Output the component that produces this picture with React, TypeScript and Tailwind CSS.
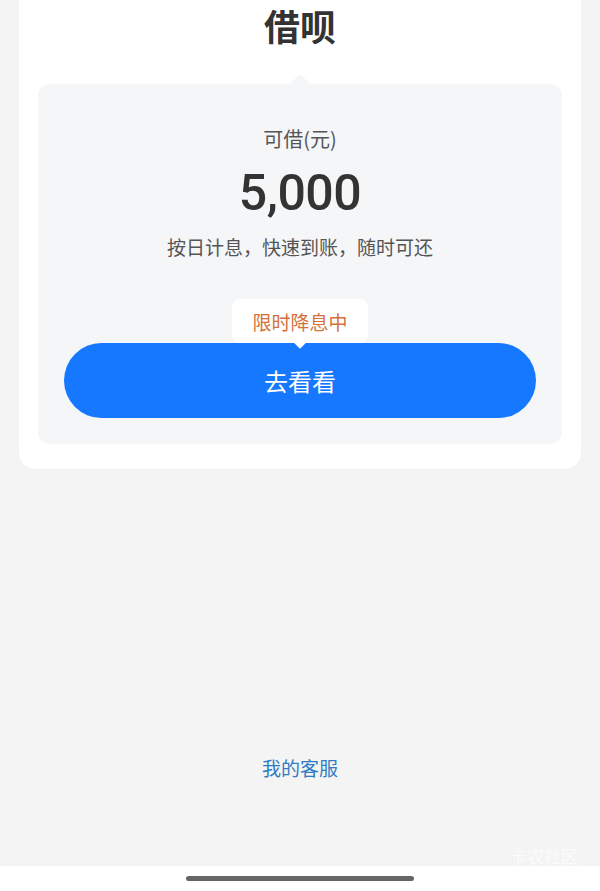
const cjk = "font-['Noto_Sans_CJK_SC','Noto_Sans',sans-serif]";

function LoanPanel() {
  return (
    <div className="relative mx-[19px] flex flex-col items-center rounded-[12px] bg-[#f5f6f8] pb-[26px] pt-[41px]">
      {/* little notch pointing up at the title */}
      <div className="absolute -top-[7px] left-1/2 h-[16px] w-[16px] -translate-x-1/2 rotate-45 rounded-[3px] bg-[#f5f6f8]" />
      <div className="text-[20px] leading-[28px] text-[#555]">可借(元)</div>
      <div className="mt-[12px] font-['Roboto',sans-serif] text-[50px] font-medium leading-[56px] tracking-[-0.5px] text-[#333]">
        5,000
      </div>
      <div className="mt-[12px] text-[19px] leading-[28px] text-[#555]">按日计息，快速到账，随时可还</div>

      <div className="mt-[38px] flex w-full flex-col items-center px-[26px]">
        <div className="relative z-10 flex h-[44px] items-center rounded-[8px] bg-white px-[20px]">
          <span className="text-[19px] leading-none text-[#d4703a]">限时降息中</span>
          <div className="absolute -bottom-[4px] left-1/2 h-[9px] w-[9px] -translate-x-1/2 rotate-45 bg-white" />
        </div>
        <button className="flex h-[75px] w-full items-center justify-center rounded-full bg-[#1677ff] text-[24px] text-white">
          去看看
        </button>
      </div>
    </div>
  );
}

export default function App() {
  return (
    <div className={`relative flex min-h-[891px] flex-col bg-[#f4f4f5] ${cjk}`}>
      <div className="mx-[19px] rounded-b-[16px] bg-white pb-[25px]">
        <h1 className="pt-[5px] text-center text-[36px] font-bold leading-[40px] text-[#333]">借呗</h1>
        <div className="mt-[39px]">
          <LoanPanel />
        </div>
      </div>

      <div className="mt-[285px] text-center text-[19px] leading-[28px] text-[#2f7bc4]">我的客服</div>

      <div className="flex-1" />
      <div className="flex h-[25px] justify-center bg-white pt-[10px]">
        <div className="h-[5px] w-[228px] rounded-full bg-[#666]" />
      </div>

      <span className="absolute bottom-[25px] right-[22px] text-[17px] leading-[20px] text-white/70">卡农社区</span>
    </div>
  );
}
